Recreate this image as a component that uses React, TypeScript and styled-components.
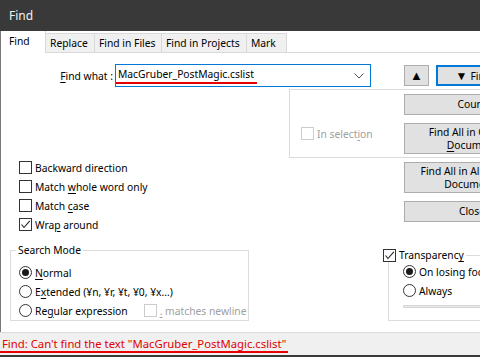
import React from 'react';
import styled, { createGlobalStyle } from 'styled-components';

const GlobalStyle = createGlobalStyle`
  html, body {
    margin: 0;
    padding: 0;
    background: #fff;
  }
  body {
    font-family: "Noto Sans", "Open Sans", sans-serif;
    font-size: 10.3px;
    color: #000;
  }
`;

const Window = styled.div`
  width: 480px;
  height: 357px;
  display: flex;
  flex-direction: column;
  overflow: hidden;
  background: #fff;
`;

const TitleBar = styled.div`
  height: 31px;
  flex-shrink: 0;
  background: #393939;
  color: #f2f2f2;
  font-size: 12px;
  display: flex;
  align-items: center;
  padding-left: 9px;
  box-sizing: border-box;
`;

const Frame = styled.div`
  flex: 1;
  display: flex;
  flex-direction: column;
  border-left: 1px solid #7a7a7a;
  min-height: 0;
`;

const TabStrip = styled.div`
  height: 21px;
  flex-shrink: 0;
  display: flex;
  align-items: flex-start;
  border-bottom: 1px solid #d9d9d9;
`;

const Tab = styled.div<{ $active?: boolean; $width: number }>`
  box-sizing: border-box;
  width: ${(p) => p.$width}px;
  height: ${(p) => (p.$active ? 22 : 19)}px;
  margin-top: ${(p) => (p.$active ? 0 : 2)}px;
  margin-bottom: ${(p) => (p.$active ? -1 : 0)}px;
  background: ${(p) => (p.$active ? '#fff' : '#f0f0f0')};
  border-top: ${(p) => (p.$active ? 'none' : '1px solid #d9d9d9')};
  border-right: 1px solid #d9d9d9;
  position: relative;
  z-index: ${(p) => (p.$active ? 1 : 0)};
  display: flex;
  align-items: ${(p) => (p.$active ? 'flex-start' : 'center')};
  padding-top: ${(p) => (p.$active ? 3 : 0)}px;
  padding-left: ${(p) => (p.$active ? 8 : 4)}px;
  white-space: nowrap;
`;

const Body = styled.div`
  flex: 1;
  display: flex;
  flex-direction: column;
  min-height: 0;
`;

const TopSection = styled.div`
  display: flex;
  align-items: flex-start;
`;

const LeftPane = styled.div`
  width: 403px;
  flex-shrink: 0;
  display: flex;
  flex-direction: column;
`;

const FindRow = styled.div`
  margin-top: 11px;
  height: 23px;
  display: flex;
  align-items: center;
`;

const FieldLabel = styled.label`
  width: 112px;
  text-align: right;
  padding-right: 2px;
  white-space: nowrap;
`;

const ComboBox = styled.div`
  box-sizing: border-box;
  width: 256px;
  height: 23px;
  border: 1px solid #0078d7;
  background: #fff;
  display: flex;
  align-items: stretch;
  justify-content: space-between;
`;

const ComboText = styled.span`
  display: flex;
  align-items: center;
  padding: 1px 3px 0 2px;
  border-bottom: 2px solid #e50000;
  margin-bottom: 2px;
  white-space: nowrap;
`;

const ComboArrow = styled.span`
  display: flex;
  align-items: center;
  padding-right: 6px;
`;

const SelectionBox = styled.div`
  box-sizing: border-box;
  margin-top: 2px;
  margin-left: 288px;
  width: 300px;
  height: 69px;
  border: 1px solid #dcdcdc;
  padding: 34px 0 0 11px;
`;

const OptionList = styled.div`
  display: flex;
  flex-direction: column;
  padding-left: 18px;
`;

const OptionRow = styled.div<{ $disabled?: boolean }>`
  height: 19px;
  display: flex;
  align-items: center;
  gap: 3px;
  white-space: nowrap;
  color: ${(p) => (p.$disabled ? '#a0a0a0' : '#000')};
`;

const Box = styled.span<{ $disabled?: boolean }>`
  box-sizing: border-box;
  width: 13px;
  height: 13px;
  flex-shrink: 0;
  border: 1px solid ${(p) => (p.$disabled ? '#cccccc' : '#333')};
  background: #fff;
  display: flex;
  align-items: center;
  justify-content: center;
`;

const Circle = styled.span<{ $on?: boolean }>`
  box-sizing: border-box;
  width: 13px;
  height: 13px;
  flex-shrink: 0;
  border: 1px solid #333;
  border-radius: 50%;
  background: #fff;
  display: flex;
  align-items: center;
  justify-content: center;
  &::after {
    content: '';
    display: ${(p) => (p.$on ? 'block' : 'none')};
    width: 7px;
    height: 7px;
    border-radius: 50%;
    background: #1a1a1a;
  }
`;

const U = styled.u`
  text-decoration: underline;
  text-underline-offset: 2px;
  text-decoration-thickness: 1px;
`;

const ButtonColumn = styled.div`
  position: relative;
  z-index: 1;
  padding-top: 12px;
  display: flex;
  flex-direction: column;
  gap: 8px;
`;

const TopButtons = styled.div`
  display: flex;
  gap: 7px;
`;

const Button = styled.div<{ $w?: number; $h?: number; $default?: boolean }>`
  box-sizing: border-box;
  width: ${(p) => p.$w ?? 136}px;
  height: ${(p) => p.$h ?? 21}px;
  flex-shrink: 0;
  background: #e1e1e1;
  border: ${(p) => (p.$default ? '2px solid #0078d7' : '1px solid #adadad')};
  display: flex;
  flex-direction: column;
  align-items: center;
  justify-content: center;
  text-align: center;
  line-height: 13px;
  white-space: nowrap;
`;

const UpGlyph = styled.span`
  font-size: 13px;
  line-height: 13px;
`;

const Arrow = styled.span`
  font-size: 12px;
  margin-right: 3px;
`;

const BottomSection = styled.div`
  display: flex;
  align-items: flex-start;
  padding: 9px 0 0 9px;
`;

const Group = styled.fieldset<{ $w: number; $h: number; $left?: number; $top?: number }>`
  box-sizing: border-box;
  margin: ${(p) => p.$top ?? 0}px 0 0 ${(p) => p.$left ?? 0}px;
  min-width: 0;
  width: ${(p) => p.$w}px;
  height: ${(p) => p.$h}px;
  border: 1px solid #dcdcdc;
  padding: 0;
  flex-shrink: 0;
`;

const Legend = styled.legend<{ $offset: number }>`
  padding: 0 2px;
  margin-left: ${(p) => p.$offset}px;
  line-height: 14px;
  height: 14px;
  display: flex;
  align-items: center;
  gap: 3px;
  white-space: nowrap;
`;

const GroupContent = styled.div<{ $pad: number; $top: number }>`
  display: flex;
  flex-direction: column;
  padding: ${(p) => p.$top}px 0 0 ${(p) => p.$pad}px;
`;

const Inline = styled.span`
  display: flex;
  align-items: center;
  gap: 3px;
  margin-left: 13px;
  color: #a0a0a0;
`;

const SliderTrack = styled.div`
  margin-top: 5px;
  height: 3px;
  width: 120px;
  background: #e7eaea;
  border: 1px solid #d6d6d6;
  box-sizing: border-box;
`;

const StatusBar = styled.div`
  margin-top: auto;
  height: 25px;
  flex-shrink: 0;
  box-sizing: border-box;
  background: #f0f0f0;
  border-top: 1px solid #dadada;
  border-bottom: 2px solid #3a3a3a;
  padding-top: 3px;
`;

const StatusText = styled.span`
  display: inline-block;
  height: 15px;
  line-height: 15px;
  padding: 0 2px;
  font-size: 11.3px;
  color: #e00000;
  border-bottom: 2px solid #e60000;
  white-space: nowrap;
`;

const Check = () => (
  <svg width="11" height="11" viewBox="0 0 11 11">
    <polyline points="1.5,5.5 4,8.5 9.8,1.8" fill="none" stroke="#222" strokeWidth="1.1" />
  </svg>
);

const CheckBox = ({ checked, disabled }: { checked?: boolean; disabled?: boolean }) => (
  <Box $disabled={disabled}>{checked && <Check />}</Box>
);

const Chevron = () => (
  <svg width="10" height="6" viewBox="0 0 10 6">
    <polyline points="0.5,0.5 5,5 9.5,0.5" fill="none" stroke="#555" strokeWidth="1" />
  </svg>
);

const tabs = [
  { label: 'Find', width: 46, active: true },
  { label: 'Replace', width: 49 },
  { label: 'Find in Files', width: 67 },
  { label: 'Find in Projects', width: 85 },
  { label: 'Mark', width: 40 },
];

const App: React.FC = () => {
  return (
    <>
      <GlobalStyle />
      <Window>
        <TitleBar>Find</TitleBar>
        <Frame>
          <TabStrip>
            {tabs.map((t) => (
              <Tab key={t.label} $active={t.active} $width={t.width - (t.active ? 1 : 0)}>
                {t.label}
              </Tab>
            ))}
          </TabStrip>

          <Body>
            <TopSection>
              <LeftPane>
                <FindRow>
                  <FieldLabel>
                    <U>F</U>ind what :
                  </FieldLabel>
                  <ComboBox>
                    <ComboText>MacGruber_PostMagic.cslist</ComboText>
                    <ComboArrow>
                      <Chevron />
                    </ComboArrow>
                  </ComboBox>
                </FindRow>

                <SelectionBox>
                  <OptionRow $disabled>
                    <CheckBox disabled />
                    <span>
                      In select<U>i</U>on
                    </span>
                  </OptionRow>
                </SelectionBox>

                <OptionList>
                  <OptionRow>
                    <CheckBox />
                    <span>Backward direction</span>
                  </OptionRow>
                  <OptionRow>
                    <CheckBox />
                    <span>
                      Match <U>w</U>hole word only
                    </span>
                  </OptionRow>
                  <OptionRow>
                    <CheckBox />
                    <span>
                      Match <U>c</U>ase
                    </span>
                  </OptionRow>
                  <OptionRow>
                    <CheckBox checked />
                    <span>
                      Wra<U>p</U> around
                    </span>
                  </OptionRow>
                </OptionList>
              </LeftPane>

              <ButtonColumn>
                <TopButtons>
                  <Button $w={25}>
                    <UpGlyph>▲</UpGlyph>
                  </Button>
                  <Button $w={100} $default>
                    <span>
                      <Arrow>▼</Arrow>Find Next
                    </span>
                  </Button>
                </TopButtons>
                <Button>Count</Button>
                <Button $h={31}>
                  <span>Find All in Current</span>
                  <span>
                    <U>D</U>ocument
                  </span>
                </Button>
                <Button $h={31}>
                  <span>Find All in All Opened</span>
                  <span>Documents</span>
                </Button>
                <Button>Close</Button>
              </ButtonColumn>
            </TopSection>

            <BottomSection>
              <Group $w={239} $h={78}>
                <Legend $offset={5}>Search Mode</Legend>
                <GroupContent $pad={8} $top={6}>
                  <OptionRow>
                    <Circle $on />
                    <span>
                      <U>N</U>ormal
                    </span>
                  </OptionRow>
                  <OptionRow>
                    <Circle />
                    <span>
                      E<U>x</U>tended (¥n, ¥r, ¥t, ¥0, ¥x...)
                    </span>
                  </OptionRow>
                  <OptionRow>
                    <Circle />
                    <span>
                      Re<U>g</U>ular expression
                    </span>
                    <Inline>
                      <CheckBox disabled />
                      <span>
                        <U>.</U> matches newline
                      </span>
                    </Inline>
                  </OptionRow>
                </GroupContent>
              </Group>

              <Group $w={120} $h={73} $left={139} $top={5}>
                <Legend $offset={-8}>
                  <CheckBox checked />
                  <span>
                    Transparenc<U>y</U>
                  </span>
                </Legend>
                <GroupContent $pad={14} $top={0}>
                  <OptionRow>
                    <Circle $on />
                    <span>On losing focus</span>
                  </OptionRow>
                  <OptionRow>
                    <Circle />
                    <span>Always</span>
                  </OptionRow>
                  <SliderTrack />
                </GroupContent>
              </Group>
            </BottomSection>
          </Body>
        </Frame>
        <StatusBar>
          <StatusText>Find: Can't find the text "MacGruber_PostMagic.cslist"</StatusText>
        </StatusBar>
      </Window>
    </>
  );
};

export default App;
